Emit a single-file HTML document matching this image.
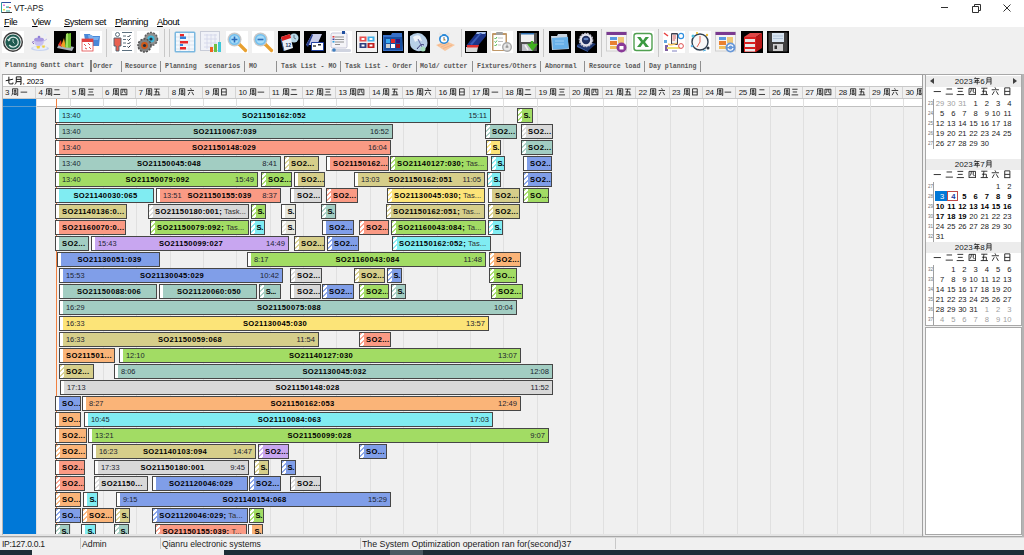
<!DOCTYPE html><html><head><meta charset="utf-8"><style>
*{margin:0;padding:0;box-sizing:border-box}
html,body{width:1024px;height:555px;overflow:hidden;background:#f0f0f0;font-family:"Liberation Sans",sans-serif;position:relative}
.abs{position:absolute}
#title{position:absolute;left:0;top:0;width:1024px;height:27px;background:#fff}
#title .t{position:absolute;left:14px;top:2.5px;font-size:8.3px;letter-spacing:0px;color:#101010}
#menu span{position:absolute;top:16.5px;font-size:9.3px;letter-spacing:-0.4px;color:#000}
#tb{position:absolute;left:0;top:27px;width:1024px;height:31px;background:#f0f0f0}
.ic{position:absolute;top:31px;width:22px;height:22px}
.sep{position:absolute;top:29px;width:1px;height:28px;background:#c8c8c8}
#tabs span{position:absolute;top:63.3px;font-family:"Liberation Mono",monospace;font-size:6.6px;font-weight:bold;color:#585858;white-space:pre}
.tsep{position:absolute;top:61px;width:1px;height:11px;background:#909090}
#gantt{position:absolute;left:3px;top:74px;width:920px;height:461px;background:#f0f0f0;border-top:1px solid #a0a0a0;overflow:hidden}
#mrow{position:absolute;left:0;top:0;width:919px;height:11px;background:#fff}
#mrow span{position:absolute;left:2px;top:1px;font-size:7.8px;letter-spacing:-0.15px;color:#000}
#drow{position:absolute;left:0;top:11px;width:919px;height:13px;background:#f0f0f0;border-top:1px solid #c8c8c8;border-bottom:1px solid #c8c8c8}
.dh{position:absolute;top:0px;width:33px;height:11px;border-right:1px solid #d4d4d4;font-size:8px;letter-spacing:-0.4px;padding-left:2px;line-height:11px;color:#202020;white-space:nowrap;overflow:hidden}
#wrow{position:absolute;left:0;top:24px;width:919px;height:8px;background:#fff;border-bottom:1px solid #c0c0c0}
#body{position:absolute;left:0;top:33px;width:919px;height:428px}
.gl{position:absolute;top:24px;width:1px;height:437px;background:#e0e0e0}
#blue{position:absolute;left:0;top:24px;width:33px;height:435px;background:#0078d7}
#now{position:absolute;left:53px;top:24px;width:1px;height:435px;background:#f08040}
.b{position:absolute;height:15px;border:1px solid #464646;overflow:hidden;white-space:nowrap;font-size:7.6px;letter-spacing:0.33px;line-height:13px;color:#000}
.b::before{content:"";position:absolute;left:0;top:0;width:3px;height:13px;background:#fff}
.b.h::before{width:4px;background:repeating-linear-gradient(135deg,rgba(255,255,255,.12) 0 1.7px,#fff 1.7px 3.7px)}
.b .m{position:absolute;left:6px;right:4px;top:0;text-align:center;overflow:visible}
.b .m b{font-weight:bold;color:#000}
.b .m.sd{letter-spacing:-0.3px;left:5.5px}
.b .m i{font-style:normal;color:#303030;letter-spacing:0}
.b .lt{position:absolute;left:6px;top:0;letter-spacing:0;font-size:7.4px;color:#1c2430}
.b .rt{position:absolute;right:3px;top:0;letter-spacing:0;font-size:7.6px;color:#1c2430}
#cal{position:absolute;left:925px;top:74px;width:97px;height:252px;background:#fff;border:1px solid #a8a8a8}
#cal2{position:absolute;left:925px;top:327px;width:97px;height:208px;background:#fff;border:1px solid #a8a8a8}
.mh{position:absolute;left:0;width:95px;height:11px;background:#ececec;font-size:8px;line-height:11px;text-align:center;color:#202020}
.wd{position:absolute;font-size:8.5px;color:#202020;width:11px;text-align:center}
.dn{position:absolute;font-size:7.6px;color:#202020;width:11.2px;text-align:right;line-height:10px}
.dn.g{color:#a0a0a0}
.dn.sel{color:#fff}
.dn.tod{color:#1838a0;font-weight:bold}
.dn.bd{font-weight:bold;color:#000}
.wk{position:absolute;left:2px;font-size:4.5px;color:#707070;line-height:10px}
.wl{position:absolute;left:7px;width:1px;background:#a0a0a0}
#status{position:absolute;left:0;top:537px;width:1024px;height:13px;background:#f0f0f0;border-top:1px solid #d8d8d8}
#status span{position:absolute;top:1.5px;font-size:8px;color:#202020;white-space:nowrap}
.ssep{position:absolute;top:538px;width:1px;height:11px;background:#c8c8c8}
#task{position:absolute;left:0;top:550px;width:1024px;height:5px;background:#1e2e36}
</style></head><body><div id="title"><div class="t">VT-APS</div></div><svg class="abs" style="left:1px;top:2px" width="11" height="11" viewBox="0 0 11 11"><path d="M0.5 0.5 H10" stroke="#3050a0" stroke-width="1"/><path d="M0.5 0.5 V10.5" stroke="#30a0a0" stroke-width="1"/><path d="M0.5 10.5 H11" stroke="#404040" stroke-width="1"/><rect x="2" y="2.5" width="2" height="1.5" fill="#e080e0"/><rect x="5" y="4.5" width="3" height="1.2" fill="#30a0a0"/><rect x="8" y="5" width="2" height="1.2" fill="#e05030"/><rect x="2" y="7" width="2" height="1.5" fill="#e0e040"/><rect x="5" y="8.5" width="4" height="1" fill="#40b0a0"/></svg><div id="menu"><span style="left:4px"><u>F</u>ile</span><span style="left:32px"><u>V</u>iew</span><span style="left:64px"><u>S</u>ystem set</span><span style="left:115px"><u>P</u>lanning</span><span style="left:157px"><u>A</u>bout</span></div><svg class="abs" style="left:930px;top:0" width="94" height="16" viewBox="0 0 94 16"><path d="M11 7.5 H18" stroke="#303030" stroke-width="1"/><path d="M42.5 6.5 H48.5 V12.5 H42.5Z M44.5 6.5 V4.5 H50.5 V10.5 H48.5" fill="none" stroke="#303030" stroke-width="1"/><path d="M73.5 4.5 L80.5 11.5 M80.5 4.5 L73.5 11.5" stroke="#303030" stroke-width="1"/></svg><div id="tb"></div><div class="ic" style="left:2px"><svg width="22" height="22" viewBox="0 0 22 22"><rect width="22" height="22" fill="#fff"/><circle cx="11" cy="11" r="10" fill="#3a3a3a"/><circle cx="11" cy="11" r="8.6" fill="#e8e8e8"/><circle cx="11" cy="11" r="7.6" fill="#1e5a50"/><path d="M6.5 9.5 A5 5 0 1 1 7.2 14" fill="none" stroke="#d8e8e4" stroke-width="1.3"/><path d="M5 8 L6.5 10.5 L8.8 8.8Z" fill="#d8e8e4"/><path d="M11 8 V11 L12.5 12.5" stroke="#d8e8e4" stroke-width="0.8" fill="none"/></svg></div><div class="ic" style="left:28px"><svg width="22" height="22" viewBox="0 0 22 22"><ellipse cx="12" cy="17.5" rx="9" ry="2.6" fill="#c8d4f0"/><ellipse cx="12" cy="17" rx="7" ry="1.8" fill="#e8eefa"/><path d="M6 9 Q6 15 11 15 Q16 15 16 9Z" fill="#c8c0f0"/><ellipse cx="11" cy="8.5" rx="5" ry="2" fill="#a898e0"/><circle cx="11" cy="6" r="1.3" fill="#9080d8"/><path d="M5.5 10 Q3.5 11 5.8 13" stroke="#8060c0" stroke-width="1" fill="none"/><path d="M16 10 L19 8" stroke="#c0b8e8" stroke-width="1"/><circle cx="17" cy="4" r="1.5" fill="#e8eef8"/><path d="M8.5 15 L12 15 L11.5 17.5 L9 17.5Z" fill="#f0d040"/><path d="M14 14.5 L17 14.5 L16.5 16.8 L14.5 16.8Z" fill="#f0d040"/></svg></div><div class="ic" style="left:54px"><svg width="22" height="22" viewBox="0 0 22 22"><rect width="22" height="22" fill="#000"/><path d="M3 17 L18 20 L20 16 L5 13Z" fill="#a8b0b8"/><path d="M4 14 L7 9 L8 16Z" fill="#e03020"/><path d="M7 15 L10 7 L12 17Z" fill="#f0a020"/><path d="M11 16 L12 3 L17 2 L17 17Z" fill="#70c030"/><path d="M12 3 L14 2 L14 17 L12 16Z" fill="#a0e060"/></svg></div><div class="ic" style="left:80px"><svg width="22" height="22" viewBox="0 0 22 22"><rect width="22" height="22" fill="#fff"/><path d="M4 3 L10 3 L11 5 L20 5 L19 15 L6 15Z" fill="#4a88d8"/><path d="M8 4 L12 4 L13 6 L19 6 L18 9 L9 9Z" fill="#78b0f0"/><rect x="2" y="8" width="11" height="12" fill="#fff" stroke="#e04848" stroke-width="0.8"/><rect x="2" y="8" width="11" height="3" fill="#e04040"/><path d="M4 13 L6 15 M8 12 L10 14 M5 17 L7 18 M9 16 L11 18" stroke="#e05050" stroke-width="1"/></svg></div><div class="ic" style="left:112px"><svg width="22" height="22" viewBox="0 0 22 22"><rect width="22" height="22" fill="#fff"/><circle cx="5.5" cy="3.5" r="2" fill="none" stroke="#4a6070" stroke-width="0.9"/><path d="M2 7 L9 7 L9 15 L7 15 L7 20 L4 20 L4 15 L2 15Z" fill="#e86050" stroke="#4a6070" stroke-width="0.9"/><path d="M10 1.5 H20 M11 5 H14 M11 8.5 H14 M11 12 H14 M11 15.5 H14 M10 19.5 H20" stroke="#4a6070" stroke-width="0.9"/><path d="M15.5 5 L16.5 6 L18.5 4 M15.5 8.5 L16.5 9.5 L18.5 7.5 M15.5 12 L16.5 13 L18.5 11 M15.5 15.5 L16.5 16.5 L18.5 14.5" stroke="#203040" stroke-width="1" fill="none"/></svg></div><div class="ic" style="left:137px"><svg width="22" height="22" viewBox="0 0 22 22"><rect width="22" height="22" fill="#fff"/><circle cx="14" cy="8" r="6.5" fill="#909090" stroke="#606060" stroke-dasharray="2 1.2" stroke-width="1.5"/><circle cx="14" cy="8" r="3.6" fill="#40b8d8"/><circle cx="14" cy="8" r="1.6" fill="#203040"/><circle cx="7.5" cy="14.5" r="6.5" fill="#808080" stroke="#505050" stroke-dasharray="2 1.2" stroke-width="1.5"/><circle cx="7.5" cy="14.5" r="3.4" fill="#d05818"/><circle cx="7.5" cy="14.5" r="1.6" fill="#203040"/></svg></div><div class="ic" style="left:174px"><svg width="22" height="22" viewBox="0 0 22 22"><rect x="0.5" y="0.5" width="21" height="21" rx="1.5" fill="#7ab8e0"/><rect x="2" y="2" width="18" height="18" fill="#f4f8fc"/><path d="M2 6 H20 M2 10 H20 M2 14 H20 M2 18 H20 M6 2 V20 M15 2 V20" stroke="#c0d0e0" stroke-width="0.5"/><rect x="6" y="3" width="4" height="2.5" fill="#e82828"/><rect x="6" y="5.5" width="6" height="2.5" fill="#3080d8"/><rect x="6" y="10" width="8" height="2.5" fill="#e82828"/><rect x="6" y="13" width="3" height="2" fill="#3080d8"/><rect x="6" y="16" width="6" height="2.5" fill="#e82828"/></svg></div><div class="ic" style="left:200px"><svg width="22" height="22" viewBox="0 0 22 22"><rect x="0.5" y="0.5" width="19" height="19" fill="#f0f2f8" stroke="#c8ccd8"/><path d="M4 4 H17 M4 8 H17 M4 12 H17 M4 16 H17 M7 3 V18 M11 3 V18 M15 3 V18" stroke="#d0d4e8" stroke-width="0.8"/><rect x="10" y="16" width="3" height="5" fill="#f06020"/><rect x="14" y="13" width="3" height="8" fill="#70c040"/><rect x="18" y="11" width="3" height="10" fill="#40c8d8"/></svg></div><div class="ic" style="left:226px"><svg width="22" height="22" viewBox="0 0 22 22"><rect width="22" height="22" fill="#fff"/><path d="M13 13 L19.5 19.5" stroke="#e8a030" stroke-width="3.2" stroke-linecap="round"/><circle cx="8.5" cy="8.5" r="7" fill="#c8c8c8"/><circle cx="8.5" cy="8.5" r="5.6" fill="#70c0f0"/><circle cx="8.5" cy="8.5" r="4" fill="#a8dcf8"/><path d="M5.5 8.5 H11.5 M8.5 5.5 V11.5" stroke="#2a6ab8" stroke-width="1.6"/></svg></div><div class="ic" style="left:252px"><svg width="22" height="22" viewBox="0 0 22 22"><rect width="22" height="22" fill="#fff"/><path d="M13 13 L19.5 19.5" stroke="#e8a030" stroke-width="3.2" stroke-linecap="round"/><circle cx="8.5" cy="8.5" r="7" fill="#c8c8c8"/><circle cx="8.5" cy="8.5" r="5.6" fill="#70c0f0"/><circle cx="8.5" cy="8.5" r="4" fill="#a8dcf8"/><path d="M5.5 8.5 H11.5" stroke="#2a6ab8" stroke-width="1.6"/></svg></div><div class="ic" style="left:278px"><svg width="22" height="22" viewBox="0 0 22 22"><rect width="22" height="22" fill="#000"/><circle cx="16" cy="7" r="4.5" fill="#b8d8e8"/><path d="M16 4 V7 L18 8" stroke="#506070" stroke-width="0.8" fill="none"/><path d="M3 6 L12 3 L15 17 L6 20Z" fill="#e8f0f8"/><path d="M3 6 L12 3 L13 7 L4 10Z" fill="#d82020"/><text x="7.5" y="16" font-size="5" font-family="Liberation Sans" fill="#203060" font-weight="bold">12</text><path d="M3 8 L6 20" stroke="#3060a0" stroke-width="1"/></svg></div><div class="ic" style="left:304px"><svg width="22" height="22" viewBox="0 0 22 22"><rect width="22" height="22" fill="#000"/><path d="M2 14 L8 3 L18 3 L13 14Z" fill="#c8cce8"/><path d="M2 14 L8 3 L9 4 L4 16Z" fill="#283c8c"/><rect x="7" y="11" width="13" height="9" rx="1" fill="#2040a0"/><rect x="8" y="12" width="11" height="7" fill="#fff"/><rect x="9" y="14" width="3" height="2" fill="#707070"/><rect x="14" y="13" width="3" height="1.5" fill="#303030"/></svg></div><div class="ic" style="left:330px"><svg width="22" height="22" viewBox="0 0 22 22"><rect width="22" height="22" fill="#fff"/><rect x="1" y="2" width="16" height="15" rx="1.5" fill="#f4f4f8" stroke="#b0b0c8" stroke-width="0.7"/><rect x="12" y="0" width="3" height="3" fill="#2050a0"/><rect x="2.5" y="5" width="2" height="1.6" fill="#e04040"/><rect x="2.5" y="7.5" width="2" height="1.6" fill="#4040a0"/><rect x="2.5" y="10" width="2" height="1.6" fill="#30a0e0"/><path d="M5 6 H14 M5 8.5 H14 M5 11 H14 M5 13.5 H10" stroke="#909090" stroke-width="1"/><rect x="1" y="18" width="20" height="3" rx="1.5" fill="#d0d4e0"/><circle cx="4" cy="19" r="1.8" fill="#4080c0"/></svg></div><div class="ic" style="left:356px"><svg width="22" height="22" viewBox="0 0 22 22"><rect x="0.5" y="0.5" width="21" height="21" fill="#f2f2f2" stroke="#202020" stroke-width="1"/><rect x="3.5" y="5.5" width="7" height="5" fill="#e85050"/><rect x="5.5" y="7" width="3" height="2" fill="#fff"/><rect x="11.5" y="5.5" width="7" height="5" fill="#40b0e8"/><rect x="13.5" y="7" width="3" height="2" fill="#fff"/><rect x="3.5" y="12" width="7" height="5" fill="#304080"/><rect x="5.5" y="13.5" width="3" height="2" fill="#fff"/><rect x="11.5" y="12" width="7" height="5" fill="#c02020"/><rect x="13.5" y="13.5" width="3" height="2" fill="#fff"/></svg></div><div class="ic" style="left:382px"><svg width="22" height="22" viewBox="0 0 22 22"><rect width="22" height="22" fill="#000"/><path d="M1 4 L9 4 L10 2 L20 2 L21 20 L1 20Z" fill="#3870c8"/><rect x="2" y="6" width="18" height="13" fill="#1850a0"/><rect x="4" y="8" width="4" height="4" fill="#38a8f0"/><rect x="9" y="8" width="4" height="4" fill="#e02828"/><rect x="14" y="8" width="4" height="4" fill="#301880"/><rect x="4" y="13" width="4" height="4" fill="#d0d0d0"/><rect x="9" y="13" width="4" height="4" fill="#fff"/><rect x="14" y="13" width="4" height="4" fill="#a01020"/></svg></div><div class="ic" style="left:408px"><svg width="22" height="22" viewBox="0 0 22 22"><rect width="22" height="22" fill="#000"/><path d="M2 5 Q8 0 14 3 Q21 8 19 15 Q16 21 9 20 Q2 18 2 12Z" fill="#b8d0e8"/><path d="M5 6 Q9 3 12 5 L14 10 Q10 8 7 11Z" fill="#f0f4fa"/><path d="M9 18 Q13 12 16 14" stroke="#303070" stroke-width="1" fill="none"/><path d="M10 8 L14 16" stroke="#505090" stroke-width="0.8"/><circle cx="15" cy="18" r="2.5" fill="#a8e0c0"/></svg></div><div class="ic" style="left:434px"><svg width="22" height="22" viewBox="0 0 22 22"><path d="M2 14 L12 10 L21 14 L11 20Z" fill="#f8c8a0"/><path d="M4 14.5 L12 11.5 M7 16 L15 12.5 M9 17.5 L18 14" stroke="#f0a878" stroke-width="0.6"/><circle cx="10" cy="8" r="5" fill="#2888d8"/><circle cx="10" cy="8.3" r="3.3" fill="#fff"/><path d="M10 6 V8.5 L11.5 9" stroke="#203040" stroke-width="0.7" fill="none"/><circle cx="6.5" cy="3" r="1.8" fill="#e8e8e8"/><circle cx="14" cy="3" r="1.8" fill="#e8e8e8"/><circle cx="10" cy="9" r="0.8" fill="#f0a020"/></svg></div><div class="ic" style="left:465px"><svg width="22" height="22" viewBox="0 0 22 22"><rect width="22" height="22" fill="#000"/><path d="M1 15 L12 1 L21 1 L21 5 L11 17Z" fill="#1c3488"/><path d="M12 1 L21 1 L20 3 L11 3Z" fill="#a8c0e8"/><path d="M5 13 L15 2 L17 2 L7 14Z" fill="#3a5cb8"/><path d="M1 16 L13 16 L12 21 L1 21Z" fill="#d8d8d8"/><path d="M2 14 L14 14 L13 16.5 L2 16.5Z" fill="#e03030"/></svg></div><div class="ic" style="left:491px"><svg width="22" height="22" viewBox="0 0 22 22"><rect width="22" height="22" fill="#fff"/><rect x="1" y="2" width="15" height="18" rx="1" fill="#c09868"/><rect x="2.5" y="4" width="12" height="15" fill="#fff"/><rect x="5" y="1" width="7" height="3" rx="1" fill="#a0a0a0"/><path d="M3.5 7 L4.5 8 L6 6 M3.5 10.5 L4.5 11.5 L6 9.5 M3.5 14 L4.5 15 L6 13" stroke="#40b040" stroke-width="0.9" fill="none"/><path d="M7 7 H12 M7 10.5 H12 M7 14 H10" stroke="#b0b0b0" stroke-width="0.8"/><circle cx="16" cy="16" r="5" fill="#a8a8a8"/><circle cx="16" cy="16" r="3.6" fill="#e8e8e8"/><path d="M16 13.5 V16.5 M14.5 16 H17.5" stroke="#707070" stroke-width="0.8"/></svg></div><div class="ic" style="left:517px"><svg width="22" height="22" viewBox="0 0 22 22"><rect width="22" height="22" fill="#000"/><rect x="2" y="2" width="18" height="18" fill="#505050"/><rect x="4" y="2" width="13" height="9" fill="#f0f0f0"/><rect x="4" y="2" width="13" height="1.5" fill="#3070b0"/><rect x="5" y="13" width="11" height="7" fill="#c0c0c8"/><path d="M8 14 L11 19" stroke="#f0f0f0" stroke-width="1.5"/><path d="M15 10 V15 M12.5 14 L15.5 18 L18.5 14Z" stroke="#40b020" stroke-width="2.5" fill="#40b020"/></svg></div><div class="ic" style="left:549px"><svg width="22" height="22" viewBox="0 0 22 22"><rect width="22" height="22" fill="#000"/><path d="M2 5 L8 5 L9 3 L18 3 L20 18 L3 19Z" fill="#c8d4e0"/><path d="M3 7 L19 6 L19.5 17.5 L4 18.5Z" fill="#68b0e8"/><path d="M6 10 H15 M6 13 H15" stroke="#b8dcf8" stroke-width="0.7"/></svg></div><div class="ic" style="left:575px"><svg width="22" height="22" viewBox="0 0 22 22"><rect width="22" height="22" fill="#000"/><path d="M2 14 L10 9 L21 13 L13 20Z" fill="#203870"/><path d="M2 14 L13 20 L13 21 L2 16Z" fill="#3858a0"/><circle cx="11" cy="9" r="6.5" fill="#e8e8f0" stroke="#c0c0d0" stroke-dasharray="1.8 1" stroke-width="1.6"/><circle cx="11" cy="9" r="4.2" fill="#203060"/><ellipse cx="11" cy="8" rx="2.5" ry="1.2" fill="#6080c0"/></svg></div><div class="ic" style="left:606px"><svg width="22" height="22" viewBox="0 0 22 22"><rect x="0.5" y="1" width="20" height="19" fill="#f4f4f4" stroke="#d0d0d0"/><rect x="0.5" y="1" width="20" height="3" fill="#7a3a90"/><rect x="4" y="6" width="7" height="3" fill="#5a9ae0"/><rect x="12" y="6" width="6" height="6" fill="#f0c878"/><rect x="4" y="10" width="7" height="4" fill="#e88030"/><rect x="4" y="15" width="7" height="3" fill="#f0c060"/><circle cx="15.5" cy="16.5" r="5" fill="#8a3a98"/><rect x="13.5" y="15" width="4" height="3.5" fill="#fff"/></svg></div><div class="ic" style="left:632px"><svg width="22" height="22" viewBox="0 0 22 22"><rect width="22" height="22" fill="#fff"/><rect x="2" y="2.5" width="18" height="17" rx="2.5" fill="#fff" stroke="#50a050" stroke-width="1.4"/><path d="M5 6 L8.5 6 L11 9.5 L13.5 6 L17 6 L13 11 L17 16 L13.5 16 L11 12.5 L8.5 16 L5 16 L9 11Z" fill="#3a9a40"/></svg></div><div class="ic" style="left:663px"><svg width="22" height="22" viewBox="0 0 22 22"><rect width="22" height="22" fill="#fff"/><rect x="8" y="2" width="7" height="12" rx="1" fill="#404050"/><rect x="9" y="3.5" width="5" height="9" fill="#f0f0f0"/><path d="M9.5 5 H13 M9.5 7 H13 M9.5 9 H12" stroke="#e04040" stroke-width="0.8"/><circle cx="18" cy="5" r="2.6" fill="none" stroke="#3090e0" stroke-width="1.2"/><path d="M1 2 L5 5" stroke="#e84040" stroke-width="1.5"/><rect x="1" y="9" width="3" height="3" fill="#60a8e0"/><rect x="2" y="14" width="3" height="6" fill="#8060a0"/><path d="M4 17 H17" stroke="#f0e070" stroke-width="2"/><circle cx="18" cy="15" r="2.4" fill="none" stroke="#e05050" stroke-width="1"/><path d="M9 20 H14" stroke="#8080c0" stroke-width="1"/><path d="M5 13 Q9 15 14 12" stroke="#f8c860" stroke-width="1.4" fill="none"/></svg></div><div class="ic" style="left:689px"><svg width="22" height="22" viewBox="0 0 22 22"><rect width="22" height="22" fill="#fff"/><circle cx="11" cy="11" r="8" fill="#f8f8f8" stroke="#304050" stroke-width="1.4"/><path d="M11 5 V11 L8 16" stroke="#e05040" stroke-width="0.9" fill="none"/><circle cx="4" cy="5" r="1.5" fill="#50c0e0"/><circle cx="18" cy="4" r="1.2" fill="#f0c040"/><circle cx="3" cy="15" r="1.3" fill="#60b0e0"/><circle cx="19" cy="17" r="1.5" fill="#303840"/><circle cx="8" cy="2" r="1" fill="#f0c020"/><path d="M14 20 L17 19" stroke="#50b0e0" stroke-width="1"/></svg></div><div class="ic" style="left:715px"><svg width="22" height="22" viewBox="0 0 22 22"><rect x="0.5" y="1" width="20" height="19" fill="#f4f4f4" stroke="#d0d0d0"/><rect x="0.5" y="1" width="20" height="3" fill="#7a3a90"/><rect x="4" y="6" width="7" height="3" fill="#5a9ae0"/><rect x="12" y="6" width="6" height="6" fill="#f0c878"/><rect x="4" y="10" width="7" height="4" fill="#e88030"/><rect x="4" y="15" width="7" height="3" fill="#f0c060"/><circle cx="15.5" cy="16.5" r="5" fill="#6898d8"/><path d="M13 16 A2.6 2.6 0 0 1 18 15.5 M18 17 A2.6 2.6 0 0 1 13 17.5" stroke="#fff" stroke-width="1.2" fill="none"/></svg></div><div class="ic" style="left:741px"><svg width="22" height="22" viewBox="0 0 22 22"><rect width="22" height="22" fill="#000"/><path d="M3 6 L9 2 L21 2 L15 6Z" fill="#e04848"/><path d="M15 6 L21 2 L21 17 L15 21Z" fill="#b81818"/><rect x="3" y="6" width="12" height="15" fill="#d82020"/><rect x="4" y="8" width="10" height="3" fill="#e8e8e8"/><rect x="4" y="13" width="10" height="3" fill="#e8e8e8"/><rect x="4" y="18" width="10" height="2.5" fill="#e8e8e8"/></svg></div><div class="ic" style="left:767px"><svg width="22" height="22" viewBox="0 0 22 22"><rect width="22" height="22" fill="#000"/><rect x="1.5" y="1.5" width="19" height="19" rx="1" fill="#404040"/><rect x="5" y="2" width="12" height="9" fill="#d8e4f0"/><path d="M6 5 H16 M6 7.5 H16" stroke="#a0b8d0" stroke-width="0.7"/><rect x="6" y="13" width="10" height="7" fill="#d0d0d0"/><rect x="7.5" y="14.5" width="2.5" height="3.5" fill="#303030"/></svg></div><div class="sep" style="left:106px"></div><div class="sep" style="left:164px"></div><div class="sep" style="left:169px"></div><div class="sep" style="left:461px"></div><div class="sep" style="left:543px"></div><div class="sep" style="left:601px"></div><div class="sep" style="left:658px"></div><div id="tabs"><div class="abs" style="left:1px;top:59px;width:89px;height:15px;background:#f3f3f3"></div><span style="left:5px;margin-top:-1px">Planning Gantt chart</span><span style="left:93px;margin-top:0px">Order</span><span style="left:125px;margin-top:0px">Resource</span><span style="left:165px;margin-top:0px">Planning  scenarios</span><span style="left:249px;margin-top:0px">MO</span><span style="left:281px;margin-top:0px">Task List - MO</span><span style="left:345px;margin-top:0px">Task List - Order</span><span style="left:420px;margin-top:0px">Mold/ cutter</span><span style="left:477px;margin-top:0px">Fixtures/Others</span><span style="left:545px;margin-top:0px">Abnormal</span><span style="left:589px;margin-top:0px">Resource load</span><span style="left:649px;margin-top:0px">Day planning</span><div class="tsep" style="left:121px"></div><div class="tsep" style="left:160px"></div><div class="tsep" style="left:244px"></div><div class="tsep" style="left:276px"></div><div class="tsep" style="left:340px"></div><div class="tsep" style="left:416px"></div><div class="tsep" style="left:472px"></div><div class="tsep" style="left:540px"></div><div class="tsep" style="left:584px"></div><div class="tsep" style="left:644px"></div><div class="tsep" style="left:700px"></div><div class="abs" style="left:90px;top:60px;width:2px;height:12px;background:#808080"></div></div><div id="gantt"><div id="mrow"><span><svg width="8.80" height="8.80" viewBox="0 0 10 10" style="vertical-align:-1px;display:inline-block;margin-left:0px"><path d="M0.8 5.4 L9.2 3.6 M4.4 0.8 V8 Q4.4 9 5.8 9 H9 V7.4" fill="none" stroke="#101010" stroke-width="1.1"/></svg><svg width="8.80" height="8.80" viewBox="0 0 10 10" style="vertical-align:-1px;display:inline-block;margin-left:0px"><path d="M2.6 1 V6 Q2.6 8.6 1 9.6 M2.6 1 H8 V9.6 L6.9 9.2 M2.6 3.8 H8 M2.6 6.4 H8" fill="none" stroke="#101010" stroke-width="1.1"/></svg>, 2023</span></div><div id="drow"><div class="dh" style="left:0.0px">3 <svg width="7.80" height="7.80" viewBox="0 0 10 10" style="vertical-align:-1px;display:inline-block;margin-left:0.6px"><path d="M2 1 V6 Q2 8.6 0.6 9.6 M2 1 H8.6 V9.6 L7.4 9.2 M3.6 3 H7 M5.3 1.8 V5 M3.4 5 H7.2 M3.9 6.4 H6.7 V8.4 H3.9 Z" fill="none" stroke="#202020" stroke-width="1.1"/></svg><svg width="7.80" height="7.80" viewBox="0 0 10 10" style="vertical-align:-1px;display:inline-block;margin-left:0.6px"><path d="M0.8 5.3 H9.2" fill="none" stroke="#202020" stroke-width="1.1"/></svg></div><div class="dh" style="left:33.4px">4 <svg width="7.80" height="7.80" viewBox="0 0 10 10" style="vertical-align:-1px;display:inline-block;margin-left:0.6px"><path d="M2 1 V6 Q2 8.6 0.6 9.6 M2 1 H8.6 V9.6 L7.4 9.2 M3.6 3 H7 M5.3 1.8 V5 M3.4 5 H7.2 M3.9 6.4 H6.7 V8.4 H3.9 Z" fill="none" stroke="#202020" stroke-width="1.1"/></svg><svg width="7.80" height="7.80" viewBox="0 0 10 10" style="vertical-align:-1px;display:inline-block;margin-left:0.6px"><path d="M1.8 2.3 H8.2 M0.8 8.3 H9.2" fill="none" stroke="#202020" stroke-width="1.1"/></svg></div><div class="dh" style="left:66.7px">5 <svg width="7.80" height="7.80" viewBox="0 0 10 10" style="vertical-align:-1px;display:inline-block;margin-left:0.6px"><path d="M2 1 V6 Q2 8.6 0.6 9.6 M2 1 H8.6 V9.6 L7.4 9.2 M3.6 3 H7 M5.3 1.8 V5 M3.4 5 H7.2 M3.9 6.4 H6.7 V8.4 H3.9 Z" fill="none" stroke="#202020" stroke-width="1.1"/></svg><svg width="7.80" height="7.80" viewBox="0 0 10 10" style="vertical-align:-1px;display:inline-block;margin-left:0.6px"><path d="M1.6 1.6 H8.4 M2.2 5.1 H7.8 M0.8 8.8 H9.2" fill="none" stroke="#202020" stroke-width="1.1"/></svg></div><div class="dh" style="left:100.1px">6 <svg width="7.80" height="7.80" viewBox="0 0 10 10" style="vertical-align:-1px;display:inline-block;margin-left:0.6px"><path d="M2 1 V6 Q2 8.6 0.6 9.6 M2 1 H8.6 V9.6 L7.4 9.2 M3.6 3 H7 M5.3 1.8 V5 M3.4 5 H7.2 M3.9 6.4 H6.7 V8.4 H3.9 Z" fill="none" stroke="#202020" stroke-width="1.1"/></svg><svg width="7.80" height="7.80" viewBox="0 0 10 10" style="vertical-align:-1px;display:inline-block;margin-left:0.6px"><path d="M1.2 1.6 V9.2 M1.2 1.6 H8.8 V9.2 M1.2 8.6 H8.8 M3.9 1.6 Q3.9 5.2 2.4 6.6 M6.1 1.6 V5.6 Q6.1 6.4 7.6 6.4" fill="none" stroke="#202020" stroke-width="1.1"/></svg></div><div class="dh" style="left:133.4px">7 <svg width="7.80" height="7.80" viewBox="0 0 10 10" style="vertical-align:-1px;display:inline-block;margin-left:0.6px"><path d="M2 1 V6 Q2 8.6 0.6 9.6 M2 1 H8.6 V9.6 L7.4 9.2 M3.6 3 H7 M5.3 1.8 V5 M3.4 5 H7.2 M3.9 6.4 H6.7 V8.4 H3.9 Z" fill="none" stroke="#202020" stroke-width="1.1"/></svg><svg width="7.80" height="7.80" viewBox="0 0 10 10" style="vertical-align:-1px;display:inline-block;margin-left:0.6px"><path d="M1.4 1.4 H8.6 M4.6 1.4 L3.6 8.8 M2.2 4.9 H7.4 V8.8 M0.8 8.8 H9.2" fill="none" stroke="#202020" stroke-width="1.1"/></svg></div><div class="dh" style="left:166.8px">8 <svg width="7.80" height="7.80" viewBox="0 0 10 10" style="vertical-align:-1px;display:inline-block;margin-left:0.6px"><path d="M2 1 V6 Q2 8.6 0.6 9.6 M2 1 H8.6 V9.6 L7.4 9.2 M3.6 3 H7 M5.3 1.8 V5 M3.4 5 H7.2 M3.9 6.4 H6.7 V8.4 H3.9 Z" fill="none" stroke="#202020" stroke-width="1.1"/></svg><svg width="7.80" height="7.80" viewBox="0 0 10 10" style="vertical-align:-1px;display:inline-block;margin-left:0.6px"><path d="M4.6 0.4 L5.6 2.2 M0.8 3.2 H9.2 M3.8 5 L1.4 9.2 M6.2 5 L8.6 9.2" fill="none" stroke="#202020" stroke-width="1.1"/></svg></div><div class="dh" style="left:200.1px">9 <svg width="7.80" height="7.80" viewBox="0 0 10 10" style="vertical-align:-1px;display:inline-block;margin-left:0.6px"><path d="M2 1 V6 Q2 8.6 0.6 9.6 M2 1 H8.6 V9.6 L7.4 9.2 M3.6 3 H7 M5.3 1.8 V5 M3.4 5 H7.2 M3.9 6.4 H6.7 V8.4 H3.9 Z" fill="none" stroke="#202020" stroke-width="1.1"/></svg><svg width="7.80" height="7.80" viewBox="0 0 10 10" style="vertical-align:-1px;display:inline-block;margin-left:0.6px"><path d="M2 1 V9.4 M2 1 H8 V9.4 M2 5.1 H8 M2 8.9 H8" fill="none" stroke="#202020" stroke-width="1.1"/></svg></div><div class="dh" style="left:233.5px">10 <svg width="7.80" height="7.80" viewBox="0 0 10 10" style="vertical-align:-1px;display:inline-block;margin-left:0.6px"><path d="M2 1 V6 Q2 8.6 0.6 9.6 M2 1 H8.6 V9.6 L7.4 9.2 M3.6 3 H7 M5.3 1.8 V5 M3.4 5 H7.2 M3.9 6.4 H6.7 V8.4 H3.9 Z" fill="none" stroke="#202020" stroke-width="1.1"/></svg><svg width="7.80" height="7.80" viewBox="0 0 10 10" style="vertical-align:-1px;display:inline-block;margin-left:0.6px"><path d="M0.8 5.3 H9.2" fill="none" stroke="#202020" stroke-width="1.1"/></svg></div><div class="dh" style="left:266.8px">11 <svg width="7.80" height="7.80" viewBox="0 0 10 10" style="vertical-align:-1px;display:inline-block;margin-left:0.6px"><path d="M2 1 V6 Q2 8.6 0.6 9.6 M2 1 H8.6 V9.6 L7.4 9.2 M3.6 3 H7 M5.3 1.8 V5 M3.4 5 H7.2 M3.9 6.4 H6.7 V8.4 H3.9 Z" fill="none" stroke="#202020" stroke-width="1.1"/></svg><svg width="7.80" height="7.80" viewBox="0 0 10 10" style="vertical-align:-1px;display:inline-block;margin-left:0.6px"><path d="M1.8 2.3 H8.2 M0.8 8.3 H9.2" fill="none" stroke="#202020" stroke-width="1.1"/></svg></div><div class="dh" style="left:300.2px">12 <svg width="7.80" height="7.80" viewBox="0 0 10 10" style="vertical-align:-1px;display:inline-block;margin-left:0.6px"><path d="M2 1 V6 Q2 8.6 0.6 9.6 M2 1 H8.6 V9.6 L7.4 9.2 M3.6 3 H7 M5.3 1.8 V5 M3.4 5 H7.2 M3.9 6.4 H6.7 V8.4 H3.9 Z" fill="none" stroke="#202020" stroke-width="1.1"/></svg><svg width="7.80" height="7.80" viewBox="0 0 10 10" style="vertical-align:-1px;display:inline-block;margin-left:0.6px"><path d="M1.6 1.6 H8.4 M2.2 5.1 H7.8 M0.8 8.8 H9.2" fill="none" stroke="#202020" stroke-width="1.1"/></svg></div><div class="dh" style="left:333.5px">13 <svg width="7.80" height="7.80" viewBox="0 0 10 10" style="vertical-align:-1px;display:inline-block;margin-left:0.6px"><path d="M2 1 V6 Q2 8.6 0.6 9.6 M2 1 H8.6 V9.6 L7.4 9.2 M3.6 3 H7 M5.3 1.8 V5 M3.4 5 H7.2 M3.9 6.4 H6.7 V8.4 H3.9 Z" fill="none" stroke="#202020" stroke-width="1.1"/></svg><svg width="7.80" height="7.80" viewBox="0 0 10 10" style="vertical-align:-1px;display:inline-block;margin-left:0.6px"><path d="M1.2 1.6 V9.2 M1.2 1.6 H8.8 V9.2 M1.2 8.6 H8.8 M3.9 1.6 Q3.9 5.2 2.4 6.6 M6.1 1.6 V5.6 Q6.1 6.4 7.6 6.4" fill="none" stroke="#202020" stroke-width="1.1"/></svg></div><div class="dh" style="left:366.9px">14 <svg width="7.80" height="7.80" viewBox="0 0 10 10" style="vertical-align:-1px;display:inline-block;margin-left:0.6px"><path d="M2 1 V6 Q2 8.6 0.6 9.6 M2 1 H8.6 V9.6 L7.4 9.2 M3.6 3 H7 M5.3 1.8 V5 M3.4 5 H7.2 M3.9 6.4 H6.7 V8.4 H3.9 Z" fill="none" stroke="#202020" stroke-width="1.1"/></svg><svg width="7.80" height="7.80" viewBox="0 0 10 10" style="vertical-align:-1px;display:inline-block;margin-left:0.6px"><path d="M1.4 1.4 H8.6 M4.6 1.4 L3.6 8.8 M2.2 4.9 H7.4 V8.8 M0.8 8.8 H9.2" fill="none" stroke="#202020" stroke-width="1.1"/></svg></div><div class="dh" style="left:400.2px">15 <svg width="7.80" height="7.80" viewBox="0 0 10 10" style="vertical-align:-1px;display:inline-block;margin-left:0.6px"><path d="M2 1 V6 Q2 8.6 0.6 9.6 M2 1 H8.6 V9.6 L7.4 9.2 M3.6 3 H7 M5.3 1.8 V5 M3.4 5 H7.2 M3.9 6.4 H6.7 V8.4 H3.9 Z" fill="none" stroke="#202020" stroke-width="1.1"/></svg><svg width="7.80" height="7.80" viewBox="0 0 10 10" style="vertical-align:-1px;display:inline-block;margin-left:0.6px"><path d="M4.6 0.4 L5.6 2.2 M0.8 3.2 H9.2 M3.8 5 L1.4 9.2 M6.2 5 L8.6 9.2" fill="none" stroke="#202020" stroke-width="1.1"/></svg></div><div class="dh" style="left:433.6px">16 <svg width="7.80" height="7.80" viewBox="0 0 10 10" style="vertical-align:-1px;display:inline-block;margin-left:0.6px"><path d="M2 1 V6 Q2 8.6 0.6 9.6 M2 1 H8.6 V9.6 L7.4 9.2 M3.6 3 H7 M5.3 1.8 V5 M3.4 5 H7.2 M3.9 6.4 H6.7 V8.4 H3.9 Z" fill="none" stroke="#202020" stroke-width="1.1"/></svg><svg width="7.80" height="7.80" viewBox="0 0 10 10" style="vertical-align:-1px;display:inline-block;margin-left:0.6px"><path d="M2 1 V9.4 M2 1 H8 V9.4 M2 5.1 H8 M2 8.9 H8" fill="none" stroke="#202020" stroke-width="1.1"/></svg></div><div class="dh" style="left:466.9px">17 <svg width="7.80" height="7.80" viewBox="0 0 10 10" style="vertical-align:-1px;display:inline-block;margin-left:0.6px"><path d="M2 1 V6 Q2 8.6 0.6 9.6 M2 1 H8.6 V9.6 L7.4 9.2 M3.6 3 H7 M5.3 1.8 V5 M3.4 5 H7.2 M3.9 6.4 H6.7 V8.4 H3.9 Z" fill="none" stroke="#202020" stroke-width="1.1"/></svg><svg width="7.80" height="7.80" viewBox="0 0 10 10" style="vertical-align:-1px;display:inline-block;margin-left:0.6px"><path d="M0.8 5.3 H9.2" fill="none" stroke="#202020" stroke-width="1.1"/></svg></div><div class="dh" style="left:500.2px">18 <svg width="7.80" height="7.80" viewBox="0 0 10 10" style="vertical-align:-1px;display:inline-block;margin-left:0.6px"><path d="M2 1 V6 Q2 8.6 0.6 9.6 M2 1 H8.6 V9.6 L7.4 9.2 M3.6 3 H7 M5.3 1.8 V5 M3.4 5 H7.2 M3.9 6.4 H6.7 V8.4 H3.9 Z" fill="none" stroke="#202020" stroke-width="1.1"/></svg><svg width="7.80" height="7.80" viewBox="0 0 10 10" style="vertical-align:-1px;display:inline-block;margin-left:0.6px"><path d="M1.8 2.3 H8.2 M0.8 8.3 H9.2" fill="none" stroke="#202020" stroke-width="1.1"/></svg></div><div class="dh" style="left:533.6px">19 <svg width="7.80" height="7.80" viewBox="0 0 10 10" style="vertical-align:-1px;display:inline-block;margin-left:0.6px"><path d="M2 1 V6 Q2 8.6 0.6 9.6 M2 1 H8.6 V9.6 L7.4 9.2 M3.6 3 H7 M5.3 1.8 V5 M3.4 5 H7.2 M3.9 6.4 H6.7 V8.4 H3.9 Z" fill="none" stroke="#202020" stroke-width="1.1"/></svg><svg width="7.80" height="7.80" viewBox="0 0 10 10" style="vertical-align:-1px;display:inline-block;margin-left:0.6px"><path d="M1.6 1.6 H8.4 M2.2 5.1 H7.8 M0.8 8.8 H9.2" fill="none" stroke="#202020" stroke-width="1.1"/></svg></div><div class="dh" style="left:567.0px">20 <svg width="7.80" height="7.80" viewBox="0 0 10 10" style="vertical-align:-1px;display:inline-block;margin-left:0.6px"><path d="M2 1 V6 Q2 8.6 0.6 9.6 M2 1 H8.6 V9.6 L7.4 9.2 M3.6 3 H7 M5.3 1.8 V5 M3.4 5 H7.2 M3.9 6.4 H6.7 V8.4 H3.9 Z" fill="none" stroke="#202020" stroke-width="1.1"/></svg><svg width="7.80" height="7.80" viewBox="0 0 10 10" style="vertical-align:-1px;display:inline-block;margin-left:0.6px"><path d="M1.2 1.6 V9.2 M1.2 1.6 H8.8 V9.2 M1.2 8.6 H8.8 M3.9 1.6 Q3.9 5.2 2.4 6.6 M6.1 1.6 V5.6 Q6.1 6.4 7.6 6.4" fill="none" stroke="#202020" stroke-width="1.1"/></svg></div><div class="dh" style="left:600.3px">21 <svg width="7.80" height="7.80" viewBox="0 0 10 10" style="vertical-align:-1px;display:inline-block;margin-left:0.6px"><path d="M2 1 V6 Q2 8.6 0.6 9.6 M2 1 H8.6 V9.6 L7.4 9.2 M3.6 3 H7 M5.3 1.8 V5 M3.4 5 H7.2 M3.9 6.4 H6.7 V8.4 H3.9 Z" fill="none" stroke="#202020" stroke-width="1.1"/></svg><svg width="7.80" height="7.80" viewBox="0 0 10 10" style="vertical-align:-1px;display:inline-block;margin-left:0.6px"><path d="M1.4 1.4 H8.6 M4.6 1.4 L3.6 8.8 M2.2 4.9 H7.4 V8.8 M0.8 8.8 H9.2" fill="none" stroke="#202020" stroke-width="1.1"/></svg></div><div class="dh" style="left:633.6px">22 <svg width="7.80" height="7.80" viewBox="0 0 10 10" style="vertical-align:-1px;display:inline-block;margin-left:0.6px"><path d="M2 1 V6 Q2 8.6 0.6 9.6 M2 1 H8.6 V9.6 L7.4 9.2 M3.6 3 H7 M5.3 1.8 V5 M3.4 5 H7.2 M3.9 6.4 H6.7 V8.4 H3.9 Z" fill="none" stroke="#202020" stroke-width="1.1"/></svg><svg width="7.80" height="7.80" viewBox="0 0 10 10" style="vertical-align:-1px;display:inline-block;margin-left:0.6px"><path d="M4.6 0.4 L5.6 2.2 M0.8 3.2 H9.2 M3.8 5 L1.4 9.2 M6.2 5 L8.6 9.2" fill="none" stroke="#202020" stroke-width="1.1"/></svg></div><div class="dh" style="left:667.0px">23 <svg width="7.80" height="7.80" viewBox="0 0 10 10" style="vertical-align:-1px;display:inline-block;margin-left:0.6px"><path d="M2 1 V6 Q2 8.6 0.6 9.6 M2 1 H8.6 V9.6 L7.4 9.2 M3.6 3 H7 M5.3 1.8 V5 M3.4 5 H7.2 M3.9 6.4 H6.7 V8.4 H3.9 Z" fill="none" stroke="#202020" stroke-width="1.1"/></svg><svg width="7.80" height="7.80" viewBox="0 0 10 10" style="vertical-align:-1px;display:inline-block;margin-left:0.6px"><path d="M2 1 V9.4 M2 1 H8 V9.4 M2 5.1 H8 M2 8.9 H8" fill="none" stroke="#202020" stroke-width="1.1"/></svg></div><div class="dh" style="left:700.4px">24 <svg width="7.80" height="7.80" viewBox="0 0 10 10" style="vertical-align:-1px;display:inline-block;margin-left:0.6px"><path d="M2 1 V6 Q2 8.6 0.6 9.6 M2 1 H8.6 V9.6 L7.4 9.2 M3.6 3 H7 M5.3 1.8 V5 M3.4 5 H7.2 M3.9 6.4 H6.7 V8.4 H3.9 Z" fill="none" stroke="#202020" stroke-width="1.1"/></svg><svg width="7.80" height="7.80" viewBox="0 0 10 10" style="vertical-align:-1px;display:inline-block;margin-left:0.6px"><path d="M0.8 5.3 H9.2" fill="none" stroke="#202020" stroke-width="1.1"/></svg></div><div class="dh" style="left:733.7px">25 <svg width="7.80" height="7.80" viewBox="0 0 10 10" style="vertical-align:-1px;display:inline-block;margin-left:0.6px"><path d="M2 1 V6 Q2 8.6 0.6 9.6 M2 1 H8.6 V9.6 L7.4 9.2 M3.6 3 H7 M5.3 1.8 V5 M3.4 5 H7.2 M3.9 6.4 H6.7 V8.4 H3.9 Z" fill="none" stroke="#202020" stroke-width="1.1"/></svg><svg width="7.80" height="7.80" viewBox="0 0 10 10" style="vertical-align:-1px;display:inline-block;margin-left:0.6px"><path d="M1.8 2.3 H8.2 M0.8 8.3 H9.2" fill="none" stroke="#202020" stroke-width="1.1"/></svg></div><div class="dh" style="left:767.1px">26 <svg width="7.80" height="7.80" viewBox="0 0 10 10" style="vertical-align:-1px;display:inline-block;margin-left:0.6px"><path d="M2 1 V6 Q2 8.6 0.6 9.6 M2 1 H8.6 V9.6 L7.4 9.2 M3.6 3 H7 M5.3 1.8 V5 M3.4 5 H7.2 M3.9 6.4 H6.7 V8.4 H3.9 Z" fill="none" stroke="#202020" stroke-width="1.1"/></svg><svg width="7.80" height="7.80" viewBox="0 0 10 10" style="vertical-align:-1px;display:inline-block;margin-left:0.6px"><path d="M1.6 1.6 H8.4 M2.2 5.1 H7.8 M0.8 8.8 H9.2" fill="none" stroke="#202020" stroke-width="1.1"/></svg></div><div class="dh" style="left:800.4px">27 <svg width="7.80" height="7.80" viewBox="0 0 10 10" style="vertical-align:-1px;display:inline-block;margin-left:0.6px"><path d="M2 1 V6 Q2 8.6 0.6 9.6 M2 1 H8.6 V9.6 L7.4 9.2 M3.6 3 H7 M5.3 1.8 V5 M3.4 5 H7.2 M3.9 6.4 H6.7 V8.4 H3.9 Z" fill="none" stroke="#202020" stroke-width="1.1"/></svg><svg width="7.80" height="7.80" viewBox="0 0 10 10" style="vertical-align:-1px;display:inline-block;margin-left:0.6px"><path d="M1.2 1.6 V9.2 M1.2 1.6 H8.8 V9.2 M1.2 8.6 H8.8 M3.9 1.6 Q3.9 5.2 2.4 6.6 M6.1 1.6 V5.6 Q6.1 6.4 7.6 6.4" fill="none" stroke="#202020" stroke-width="1.1"/></svg></div><div class="dh" style="left:833.8px">28 <svg width="7.80" height="7.80" viewBox="0 0 10 10" style="vertical-align:-1px;display:inline-block;margin-left:0.6px"><path d="M2 1 V6 Q2 8.6 0.6 9.6 M2 1 H8.6 V9.6 L7.4 9.2 M3.6 3 H7 M5.3 1.8 V5 M3.4 5 H7.2 M3.9 6.4 H6.7 V8.4 H3.9 Z" fill="none" stroke="#202020" stroke-width="1.1"/></svg><svg width="7.80" height="7.80" viewBox="0 0 10 10" style="vertical-align:-1px;display:inline-block;margin-left:0.6px"><path d="M1.4 1.4 H8.6 M4.6 1.4 L3.6 8.8 M2.2 4.9 H7.4 V8.8 M0.8 8.8 H9.2" fill="none" stroke="#202020" stroke-width="1.1"/></svg></div><div class="dh" style="left:867.1px">29 <svg width="7.80" height="7.80" viewBox="0 0 10 10" style="vertical-align:-1px;display:inline-block;margin-left:0.6px"><path d="M2 1 V6 Q2 8.6 0.6 9.6 M2 1 H8.6 V9.6 L7.4 9.2 M3.6 3 H7 M5.3 1.8 V5 M3.4 5 H7.2 M3.9 6.4 H6.7 V8.4 H3.9 Z" fill="none" stroke="#202020" stroke-width="1.1"/></svg><svg width="7.80" height="7.80" viewBox="0 0 10 10" style="vertical-align:-1px;display:inline-block;margin-left:0.6px"><path d="M4.6 0.4 L5.6 2.2 M0.8 3.2 H9.2 M3.8 5 L1.4 9.2 M6.2 5 L8.6 9.2" fill="none" stroke="#202020" stroke-width="1.1"/></svg></div><div class="dh" style="left:900.5px">30 <svg width="7.80" height="7.80" viewBox="0 0 10 10" style="vertical-align:-1px;display:inline-block;margin-left:0.6px"><path d="M2 1 V6 Q2 8.6 0.6 9.6 M2 1 H8.6 V9.6 L7.4 9.2 M3.6 3 H7 M5.3 1.8 V5 M3.4 5 H7.2 M3.9 6.4 H6.7 V8.4 H3.9 Z" fill="none" stroke="#202020" stroke-width="1.1"/></svg><svg width="7.80" height="7.80" viewBox="0 0 10 10" style="vertical-align:-1px;display:inline-block;margin-left:0.6px"><path d="M2 1 V9.4 M2 1 H8 V9.4 M2 5.1 H8 M2 8.9 H8" fill="none" stroke="#202020" stroke-width="1.1"/></svg></div></div><div id="wrow"></div><div class="gl" style="left:33px"></div><div class="gl" style="left:67px"></div><div class="gl" style="left:100px"></div><div class="gl" style="left:133px"></div><div class="gl" style="left:167px"></div><div class="gl" style="left:200px"></div><div class="gl" style="left:233px"></div><div class="gl" style="left:267px"></div><div class="gl" style="left:300px"></div><div class="gl" style="left:333px"></div><div class="gl" style="left:367px"></div><div class="gl" style="left:400px"></div><div class="gl" style="left:434px"></div><div class="gl" style="left:467px"></div><div class="gl" style="left:500px"></div><div class="gl" style="left:534px"></div><div class="gl" style="left:567px"></div><div class="gl" style="left:600px"></div><div class="gl" style="left:634px"></div><div class="gl" style="left:667px"></div><div class="gl" style="left:700px"></div><div class="gl" style="left:734px"></div><div class="gl" style="left:767px"></div><div class="gl" style="left:800px"></div><div class="gl" style="left:834px"></div><div class="gl" style="left:867px"></div><div class="gl" style="left:900px"></div><div id="blue"></div><div id="now"></div><div class="abs" style="left:0;top:31px;width:33px;height:1px;background:rgba(200,200,200,.45)"></div></div><div class="abs" style="left:0;top:0;width:923px;height:534px;overflow:hidden"><div class="b w" style="left:55px;top:108px;width:436px;background:#80ecf2"><span class="lt">13:40</span><span class="rt">15:11</span><span class="m c"><b>SO21150162:052</b></span></div><div class="b h" style="left:517px;top:108px;width:16px;background:#a2dc64"><span class="m sd"><b>S.</b></span></div><div class="b w" style="left:55px;top:124px;width:338px;background:#a2cdc2"><span class="lt">13:40</span><span class="rt">16:52</span><span class="m c"><b>SO21110067:039</b></span></div><div class="b h" style="left:485px;top:124px;width:32px;background:#a2cdc2"><span class="m"><b>SO2...</b></span></div><div class="b h" style="left:521px;top:124px;width:32px;background:#d8d8d8"><span class="m"><b>SO2...</b></span></div><div class="b w" style="left:55px;top:140px;width:336px;background:#fa9a84"><span class="lt">13:40</span><span class="rt">16:04</span><span class="m c"><b>SO21150148:029</b></span></div><div class="b h" style="left:486px;top:140px;width:15px;background:#fce478"><span class="m sd"><b>S.</b></span></div><div class="b h" style="left:521px;top:140px;width:32px;background:#a2cdc2"><span class="m"><b>SO2...</b></span></div><div class="b w" style="left:55px;top:156px;width:226px;background:#a2cdc2"><span class="lt">13:40</span><span class="rt">8:41</span><span class="m c"><b>SO21150045:048</b></span></div><div class="b h" style="left:284px;top:156px;width:35px;background:#d6ce8a"><span class="m"><b>SO2...</b></span></div><div class="b w" style="left:326px;top:156px;width:63px;background:#fa9a84"><span class="m"><b>SO21150162...</b></span></div><div class="b h" style="left:390px;top:156px;width:98px;background:#a2dc64"><span class="m"><b>SO21140127:030;</b><i> Tas...</i></span></div><div class="b h" style="left:491px;top:156px;width:14px;background:#80ecf2"><span class="m sd"><b>S.</b></span></div><div class="b w" style="left:523px;top:156px;width:29px;background:#809ee8"><span class="m"><b>SO2...</b></span></div><div class="b w" style="left:55px;top:172px;width:203px;background:#a2dc64"><span class="lt">13:40</span><span class="rt">15:49</span><span class="m c"><b>SO21150079:092</b></span></div><div class="b h" style="left:261px;top:172px;width:31px;background:#a2dc64"><span class="m"><b>SO2...</b></span></div><div class="b w" style="left:294px;top:172px;width:31px;background:#d6ce8a"><span class="m"><b>SO2...</b></span></div><div class="b w" style="left:354px;top:172px;width:131px;background:#d6ce8a"><span class="lt">13:03</span><span class="rt">11:05</span><span class="m c"><b>SO21150162:051</b></span></div><div class="b h" style="left:487px;top:172px;width:14px;background:#80ecf2"><span class="m sd"><b>S.</b></span></div><div class="b h" style="left:523px;top:172px;width:29px;background:#809ee8"><span class="m"><b>SO2...</b></span></div><div class="b w" style="left:55px;top:188px;width:99px;background:#80ecf2"><span class="m"><b>SO21140030:065</b></span></div><div class="b w" style="left:156px;top:188px;width:125px;background:#fa9a84"><span class="lt">13:51</span><span class="rt">8:37</span><span class="m c"><b>SO21150155:039</b></span></div><div class="b w" style="left:290px;top:188px;width:32px;background:#d8d8d8"><span class="m"><b>SO2...</b></span></div><div class="b h" style="left:326px;top:188px;width:32px;background:#fa9a84"><span class="m"><b>SO2...</b></span></div><div class="b h" style="left:387px;top:188px;width:98px;background:#fce478"><span class="m"><b>SO21130045:030;</b><i> Tas...</i></span></div><div class="b w" style="left:488px;top:188px;width:32px;background:#d6ce8a"><span class="m"><b>SO2...</b></span></div><div class="b h" style="left:523px;top:188px;width:26px;background:#a2dc64"><span class="m"><b>SO...</b></span></div><div class="b w" style="left:55px;top:204px;width:72px;background:#d6ce8a"><span class="m"><b>SO21140136:0...</b></span></div><div class="b h" style="left:148px;top:204px;width:101px;background:#d8d8d8"><span class="m"><b>SO21150180:001;</b><i> Task...</i></span></div><div class="b h" style="left:251px;top:204px;width:15px;background:#a2dc64"><span class="m sd"><b>S.</b></span></div><div class="b w" style="left:281px;top:204px;width:15px;background:#e6e6dc"><span class="m sd"><b>S.</b></span></div><div class="b h" style="left:321px;top:204px;width:15px;background:#a2cdc2"><span class="m sd"><b>S.</b></span></div><div class="b h" style="left:386px;top:204px;width:99px;background:#d6ce8a"><span class="m"><b>SO21150162:051;</b><i> Tas...</i></span></div><div class="b h" style="left:488px;top:204px;width:32px;background:#d6ce8a"><span class="m"><b>SO2...</b></span></div><div class="b w" style="left:55px;top:220px;width:71px;background:#fa9a84"><span class="m"><b>SO21160070:0...</b></span></div><div class="b h" style="left:150px;top:220px;width:99px;background:#a2dc64"><span class="m"><b>SO21150079:092;</b><i> Tas...</i></span></div><div class="b h" style="left:250px;top:220px;width:15px;background:#80ecf2"><span class="m sd"><b>S.</b></span></div><div class="b h" style="left:281px;top:220px;width:15px;background:#e6e6dc"><span class="m sd"><b>S.</b></span></div><div class="b w" style="left:322px;top:220px;width:32px;background:#809ee8"><span class="m"><b>SO2...</b></span></div><div class="b h" style="left:359px;top:220px;width:30px;background:#fa9a84"><span class="m"><b>SO2...</b></span></div><div class="b h" style="left:391px;top:220px;width:95px;background:#a2dc64"><span class="m"><b>SO21160043:084;</b><i> Ta...</i></span></div><div class="b h" style="left:488px;top:220px;width:15px;background:#80ecf2"><span class="m sd"><b>S.</b></span></div><div class="b w" style="left:55px;top:236px;width:34px;background:#a2cdc2"><span class="m"><b>SO2...</b></span></div><div class="b w" style="left:91px;top:236px;width:198px;background:#c8a6f0"><span class="lt">15:43</span><span class="rt">14:49</span><span class="m c"><b>SO21150099:027</b></span></div><div class="b h" style="left:294px;top:236px;width:31px;background:#d6ce8a"><span class="m"><b>SO2...</b></span></div><div class="b h" style="left:327px;top:236px;width:32px;background:#809ee8"><span class="m"><b>SO2...</b></span></div><div class="b h" style="left:392px;top:236px;width:99px;background:#80ecf2"><span class="m"><b>SO21150162:052;</b><i> Tas...</i></span></div><div class="b w" style="left:57px;top:252px;width:103px;background:#809ee8"><span class="m"><b>SO21130051:039</b></span></div><div class="b w" style="left:247px;top:252px;width:239px;background:#a2dc64"><span class="lt">8:17</span><span class="rt">11:48</span><span class="m c"><b>SO21160043:084</b></span></div><div class="b h" style="left:489px;top:252px;width:32px;background:#fab478"><span class="m"><b>SO2...</b></span></div><div class="b w" style="left:59px;top:268px;width:224px;background:#809ee8"><span class="lt">15:53</span><span class="rt">10:42</span><span class="m c"><b>SO21130045:029</b></span></div><div class="b h" style="left:290px;top:268px;width:32px;background:#d8d8d8"><span class="m"><b>SO2...</b></span></div><div class="b h" style="left:354px;top:268px;width:31px;background:#d6ce8a"><span class="m"><b>SO2...</b></span></div><div class="b h" style="left:387px;top:268px;width:15px;background:#809ee8"><span class="m sd"><b>S.</b></span></div><div class="b h" style="left:489px;top:268px;width:28px;background:#a2dc64"><span class="m"><b>SO...</b></span></div><div class="b w" style="left:59px;top:284px;width:98px;background:#a2cdc2"><span class="m"><b>SO21150088:006</b></span></div><div class="b w" style="left:159px;top:284px;width:98px;background:#a2cdc2"><span class="m"><b>SO21120060:050</b></span></div><div class="b h" style="left:259px;top:284px;width:22px;background:#a2cdc2"><span class="m sd"><b>S...</b></span></div><div class="b w" style="left:290px;top:284px;width:31px;background:#d8d8d8"><span class="m"><b>SO2...</b></span></div><div class="b h" style="left:322px;top:284px;width:32px;background:#809ee8"><span class="m"><b>SO2...</b></span></div><div class="b h" style="left:359px;top:284px;width:30px;background:#a2dc64"><span class="m"><b>SO2...</b></span></div><div class="b h" style="left:391px;top:284px;width:15px;background:#a2cdc2"><span class="m sd"><b>S.</b></span></div><div class="b h" style="left:491px;top:284px;width:32px;background:#a2dc64"><span class="m"><b>SO2...</b></span></div><div class="b w" style="left:59px;top:300px;width:458px;background:#a2cdc2"><span class="lt">16:29</span><span class="rt">10:04</span><span class="m c"><b>SO21150075:088</b></span></div><div class="b w" style="left:59px;top:316px;width:430px;background:#fce478"><span class="lt">16:33</span><span class="rt">13:57</span><span class="m c"><b>SO21130045:030</b></span></div><div class="b w" style="left:59px;top:332px;width:260px;background:#d6ce8a"><span class="lt">16:33</span><span class="rt">11:54</span><span class="m c"><b>SO21150059:068</b></span></div><div class="b h" style="left:359px;top:332px;width:32px;background:#fa9a84"><span class="m"><b>SO2...</b></span></div><div class="b w" style="left:59px;top:348px;width:56px;background:#fab478"><span class="m"><b>SO211501...</b></span></div><div class="b w" style="left:119px;top:348px;width:402px;background:#a2dc64"><span class="lt">12:10</span><span class="rt">13:07</span><span class="m c"><b>SO21140127:030</b></span></div><div class="b h" style="left:59px;top:364px;width:35px;background:#d6ce8a"><span class="m"><b>SO2...</b></span></div><div class="b w" style="left:114px;top:364px;width:439px;background:#a2cdc2"><span class="lt">8:06</span><span class="rt">12:08</span><span class="m c"><b>SO21130045:032</b></span></div><div class="b w" style="left:60px;top:380px;width:493px;background:#d8d8d8"><span class="lt">17:13</span><span class="rt">11:52</span><span class="m c"><b>SO21150148:028</b></span></div><div class="b w" style="left:55px;top:396px;width:26px;background:#809ee8"><span class="m"><b>SO...</b></span></div><div class="b w" style="left:82px;top:396px;width:439px;background:#fab478"><span class="lt">8:27</span><span class="rt">12:49</span><span class="m c"><b>SO21150162:053</b></span></div><div class="b w" style="left:55px;top:412px;width:26px;background:#fab478"><span class="m"><b>SO...</b></span></div><div class="b w" style="left:84px;top:412px;width:409px;background:#80ecf2"><span class="lt">10:45</span><span class="rt">17:03</span><span class="m c"><b>SO21110084:063</b></span></div><div class="b w" style="left:55px;top:428px;width:32px;background:#fab478"><span class="m"><b>SO2...</b></span></div><div class="b w" style="left:88px;top:428px;width:461px;background:#a2dc64"><span class="lt">13:21</span><span class="rt">9:07</span><span class="m c"><b>SO21150099:028</b></span></div><div class="b h" style="left:55px;top:444px;width:32px;background:#fab478"><span class="m"><b>SO2...</b></span></div><div class="b w" style="left:92px;top:444px;width:164px;background:#d6ce8a"><span class="lt">16:23</span><span class="rt">14:47</span><span class="m c"><b>SO21140103:094</b></span></div><div class="b h" style="left:258px;top:444px;width:31px;background:#c8a6f0"><span class="m"><b>SO2...</b></span></div><div class="b h" style="left:359px;top:444px;width:28px;background:#809ee8"><span class="m"><b>SO...</b></span></div><div class="b w" style="left:55px;top:460px;width:30px;background:#fa9a84"><span class="m"><b>SO2...</b></span></div><div class="b w" style="left:94px;top:460px;width:155px;background:#d8d8d8"><span class="lt">17:33</span><span class="rt">9:45</span><span class="m c"><b>SO21150180:001</b></span></div><div class="b h" style="left:254px;top:460px;width:15px;background:#d6ce8a"><span class="m sd"><b>S.</b></span></div><div class="b h" style="left:281px;top:460px;width:15px;background:#809ee8"><span class="m sd"><b>S.</b></span></div><div class="b h" style="left:55px;top:476px;width:30px;background:#fa9a84"><span class="m"><b>SO2...</b></span></div><div class="b h" style="left:94px;top:476px;width:54px;background:#d8d8d8"><span class="m"><b>SO21150...</b></span></div><div class="b w" style="left:152px;top:476px;width:96px;background:#809ee8"><span class="m"><b>SO21120046:029</b></span></div><div class="b h" style="left:249px;top:476px;width:32px;background:#809ee8"><span class="m"><b>SO2...</b></span></div><div class="b h" style="left:290px;top:476px;width:31px;background:#d8d8d8"><span class="m"><b>SO2...</b></span></div><div class="b h" style="left:55px;top:492px;width:26px;background:#fab478"><span class="m"><b>SO...</b></span></div><div class="b w" style="left:83px;top:492px;width:15px;background:#80ecf2"><span class="m sd"><b>S.</b></span></div><div class="b w" style="left:116px;top:492px;width:275px;background:#809ee8"><span class="lt">9:15</span><span class="rt">15:29</span><span class="m c"><b>SO21140154:068</b></span></div><div class="b h" style="left:55px;top:508px;width:26px;background:#809ee8"><span class="m"><b>SO...</b></span></div><div class="b h" style="left:82px;top:508px;width:32px;background:#fab478"><span class="m"><b>SO2...</b></span></div><div class="b h" style="left:115px;top:508px;width:15px;background:#d6ce8a"><span class="m sd"><b>S.</b></span></div><div class="b h" style="left:152px;top:508px;width:96px;background:#809ee8"><span class="m"><b>SO21120046:029;</b><i> Ta...</i></span></div><div class="b h" style="left:249px;top:508px;width:15px;background:#a2dc64"><span class="m sd"><b>S.</b></span></div><div class="b h" style="left:55px;top:524px;width:15px;background:#a2cdc2"><span class="m sd"><b>S.</b></span></div><div class="b w" style="left:81px;top:524px;width:15px;background:#80ecf2"><span class="m sd"><b>S.</b></span></div><div class="b h" style="left:114px;top:524px;width:15px;background:#a2cdc2"><span class="m sd"><b>S.</b></span></div><div class="b h" style="left:155px;top:524px;width:92px;background:#fa9a84"><span class="m"><b>SO21150155:039;</b><i> T...</i></span></div><div class="b w" style="left:248px;top:524px;width:15px;background:#fab478"><span class="m sd"><b>S.</b></span></div></div><div class="abs" style="left:0;top:534px;width:924px;height:2px;background:#e4e4e4"></div><div class="abs" style="left:0;top:536px;width:1024px;height:1px;background:#a8a8a8"></div><div class="abs" style="left:2px;top:74px;width:1px;height:461px;background:#b8b8b8"></div><div class="abs" style="left:2px;top:74px;width:1020px;height:1px;background:#a0a0a0"></div><div class="abs" style="left:922px;top:74px;width:1px;height:462px;background:#a0a0a0"></div><div id="cal"><div class="mh" style="top:1px">2023<svg width="7.60" height="7.60" viewBox="0 0 10 10" style="vertical-align:-1px;display:inline-block;margin-left:0px"><path d="M3.2 0.4 L1.6 3 M2.6 2 H8.6 M2.2 4.6 H8 M3.2 4.6 V6.9 M0.8 6.9 H9.2 M5.6 2 V9.8" fill="none" stroke="#202020" stroke-width="1.05"/></svg>6<svg width="7.60" height="7.60" viewBox="0 0 10 10" style="vertical-align:-1px;display:inline-block;margin-left:0px"><path d="M2.6 1 V6 Q2.6 8.6 1 9.6 M2.6 1 H8 V9.6 L6.9 9.2 M2.6 3.8 H8 M2.6 6.4 H8" fill="none" stroke="#202020" stroke-width="1.05"/></svg></div><div class="abs" style="left:4px;top:3px;width:0;height:0;border-top:3.5px solid transparent;border-bottom:3.5px solid transparent;border-right:4px solid #404040"></div><div class="abs" style="left:87px;top:3px;width:0;height:0;border-top:3.5px solid transparent;border-bottom:3.5px solid transparent;border-left:4px solid #404040"></div><div class="wd" style="left:5.7px;top:12px"><svg width="8.60" height="8.60" viewBox="0 0 10 10" style="vertical-align:-1px;display:inline-block;margin-left:0px"><path d="M0.8 5.3 H9.2" fill="none" stroke="#202020" stroke-width="1.05"/></svg></div><div class="wd" style="left:17.4px;top:12px"><svg width="8.60" height="8.60" viewBox="0 0 10 10" style="vertical-align:-1px;display:inline-block;margin-left:0px"><path d="M1.8 2.3 H8.2 M0.8 8.3 H9.2" fill="none" stroke="#202020" stroke-width="1.05"/></svg></div><div class="wd" style="left:29.0px;top:12px"><svg width="8.60" height="8.60" viewBox="0 0 10 10" style="vertical-align:-1px;display:inline-block;margin-left:0px"><path d="M1.6 1.6 H8.4 M2.2 5.1 H7.8 M0.8 8.8 H9.2" fill="none" stroke="#202020" stroke-width="1.05"/></svg></div><div class="wd" style="left:40.7px;top:12px"><svg width="8.60" height="8.60" viewBox="0 0 10 10" style="vertical-align:-1px;display:inline-block;margin-left:0px"><path d="M1.2 1.6 V9.2 M1.2 1.6 H8.8 V9.2 M1.2 8.6 H8.8 M3.9 1.6 Q3.9 5.2 2.4 6.6 M6.1 1.6 V5.6 Q6.1 6.4 7.6 6.4" fill="none" stroke="#202020" stroke-width="1.05"/></svg></div><div class="wd" style="left:52.4px;top:12px"><svg width="8.60" height="8.60" viewBox="0 0 10 10" style="vertical-align:-1px;display:inline-block;margin-left:0px"><path d="M1.4 1.4 H8.6 M4.6 1.4 L3.6 8.8 M2.2 4.9 H7.4 V8.8 M0.8 8.8 H9.2" fill="none" stroke="#202020" stroke-width="1.05"/></svg></div><div class="wd" style="left:64.0px;top:12px"><svg width="8.60" height="8.60" viewBox="0 0 10 10" style="vertical-align:-1px;display:inline-block;margin-left:0px"><path d="M4.6 0.4 L5.6 2.2 M0.8 3.2 H9.2 M3.8 5 L1.4 9.2 M6.2 5 L8.6 9.2" fill="none" stroke="#202020" stroke-width="1.05"/></svg></div><div class="wd" style="left:75.7px;top:12px"><svg width="8.60" height="8.60" viewBox="0 0 10 10" style="vertical-align:-1px;display:inline-block;margin-left:0px"><path d="M2 1 V9.4 M2 1 H8 V9.4 M2 5.1 H8 M2 8.9 H8" fill="none" stroke="#202020" stroke-width="1.05"/></svg></div><div class="wl" style="top:24px;height:50px"></div><div class="wk" style="top:24px">23</div><div class="dn g" style="left:7.0px;top:24px">29</div><div class="dn g" style="left:18.2px;top:24px">30</div><div class="dn g" style="left:29.4px;top:24px">31</div><div class="dn " style="left:40.6px;top:24px">1</div><div class="dn " style="left:51.8px;top:24px">2</div><div class="dn " style="left:63.0px;top:24px">3</div><div class="dn " style="left:74.2px;top:24px">4</div><div class="wk" style="top:34px">24</div><div class="dn " style="left:7.0px;top:34px">5</div><div class="dn " style="left:18.2px;top:34px">6</div><div class="dn " style="left:29.4px;top:34px">7</div><div class="dn " style="left:40.6px;top:34px">8</div><div class="dn " style="left:51.8px;top:34px">9</div><div class="dn " style="left:63.0px;top:34px">10</div><div class="dn " style="left:74.2px;top:34px">11</div><div class="wk" style="top:44px">25</div><div class="dn " style="left:7.0px;top:44px">12</div><div class="dn " style="left:18.2px;top:44px">13</div><div class="dn " style="left:29.4px;top:44px">14</div><div class="dn " style="left:40.6px;top:44px">15</div><div class="dn " style="left:51.8px;top:44px">16</div><div class="dn " style="left:63.0px;top:44px">17</div><div class="dn " style="left:74.2px;top:44px">18</div><div class="wk" style="top:54px">26</div><div class="dn " style="left:7.0px;top:54px">19</div><div class="dn " style="left:18.2px;top:54px">20</div><div class="dn " style="left:29.4px;top:54px">21</div><div class="dn " style="left:40.6px;top:54px">22</div><div class="dn " style="left:51.8px;top:54px">23</div><div class="dn " style="left:63.0px;top:54px">24</div><div class="dn " style="left:74.2px;top:54px">25</div><div class="wk" style="top:64px">27</div><div class="dn " style="left:7.0px;top:64px">26</div><div class="dn " style="left:18.2px;top:64px">27</div><div class="dn " style="left:29.4px;top:64px">28</div><div class="dn " style="left:40.6px;top:64px">29</div><div class="dn " style="left:51.8px;top:64px">30</div><div class="abs" style="left:9px;top:116px;width:11.5px;height:10px;background:#0078d7"></div><div class="abs" style="left:20.5px;top:116px;width:11.5px;height:10px;border:1px solid #c04848"></div><div class="mh" style="top:84px">2023<svg width="7.60" height="7.60" viewBox="0 0 10 10" style="vertical-align:-1px;display:inline-block;margin-left:0px"><path d="M3.2 0.4 L1.6 3 M2.6 2 H8.6 M2.2 4.6 H8 M3.2 4.6 V6.9 M0.8 6.9 H9.2 M5.6 2 V9.8" fill="none" stroke="#202020" stroke-width="1.05"/></svg>7<svg width="7.60" height="7.60" viewBox="0 0 10 10" style="vertical-align:-1px;display:inline-block;margin-left:0px"><path d="M2.6 1 V6 Q2.6 8.6 1 9.6 M2.6 1 H8 V9.6 L6.9 9.2 M2.6 3.8 H8 M2.6 6.4 H8" fill="none" stroke="#202020" stroke-width="1.05"/></svg></div><div class="wd" style="left:5.7px;top:95px"><svg width="8.60" height="8.60" viewBox="0 0 10 10" style="vertical-align:-1px;display:inline-block;margin-left:0px"><path d="M0.8 5.3 H9.2" fill="none" stroke="#202020" stroke-width="1.05"/></svg></div><div class="wd" style="left:17.4px;top:95px"><svg width="8.60" height="8.60" viewBox="0 0 10 10" style="vertical-align:-1px;display:inline-block;margin-left:0px"><path d="M1.8 2.3 H8.2 M0.8 8.3 H9.2" fill="none" stroke="#202020" stroke-width="1.05"/></svg></div><div class="wd" style="left:29.0px;top:95px"><svg width="8.60" height="8.60" viewBox="0 0 10 10" style="vertical-align:-1px;display:inline-block;margin-left:0px"><path d="M1.6 1.6 H8.4 M2.2 5.1 H7.8 M0.8 8.8 H9.2" fill="none" stroke="#202020" stroke-width="1.05"/></svg></div><div class="wd" style="left:40.7px;top:95px"><svg width="8.60" height="8.60" viewBox="0 0 10 10" style="vertical-align:-1px;display:inline-block;margin-left:0px"><path d="M1.2 1.6 V9.2 M1.2 1.6 H8.8 V9.2 M1.2 8.6 H8.8 M3.9 1.6 Q3.9 5.2 2.4 6.6 M6.1 1.6 V5.6 Q6.1 6.4 7.6 6.4" fill="none" stroke="#202020" stroke-width="1.05"/></svg></div><div class="wd" style="left:52.4px;top:95px"><svg width="8.60" height="8.60" viewBox="0 0 10 10" style="vertical-align:-1px;display:inline-block;margin-left:0px"><path d="M1.4 1.4 H8.6 M4.6 1.4 L3.6 8.8 M2.2 4.9 H7.4 V8.8 M0.8 8.8 H9.2" fill="none" stroke="#202020" stroke-width="1.05"/></svg></div><div class="wd" style="left:64.0px;top:95px"><svg width="8.60" height="8.60" viewBox="0 0 10 10" style="vertical-align:-1px;display:inline-block;margin-left:0px"><path d="M4.6 0.4 L5.6 2.2 M0.8 3.2 H9.2 M3.8 5 L1.4 9.2 M6.2 5 L8.6 9.2" fill="none" stroke="#202020" stroke-width="1.05"/></svg></div><div class="wd" style="left:75.7px;top:95px"><svg width="8.60" height="8.60" viewBox="0 0 10 10" style="vertical-align:-1px;display:inline-block;margin-left:0px"><path d="M2 1 V9.4 M2 1 H8 V9.4 M2 5.1 H8 M2 8.9 H8" fill="none" stroke="#202020" stroke-width="1.05"/></svg></div><div class="wl" style="top:107px;height:60px"></div><div class="wk" style="top:107px">27</div><div class="dn " style="left:63.0px;top:107px">1</div><div class="dn " style="left:74.2px;top:107px">2</div><div class="wk" style="top:117px">28</div><div class="dn sel" style="left:7.0px;top:117px">3</div><div class="dn tod" style="left:18.2px;top:117px">4</div><div class="dn bd" style="left:29.4px;top:117px">5</div><div class="dn bd" style="left:40.6px;top:117px">6</div><div class="dn bd" style="left:51.8px;top:117px">7</div><div class="dn bd" style="left:63.0px;top:117px">8</div><div class="dn bd" style="left:74.2px;top:117px">9</div><div class="wk" style="top:127px">29</div><div class="dn bd" style="left:7.0px;top:127px">10</div><div class="dn bd" style="left:18.2px;top:127px">11</div><div class="dn bd" style="left:29.4px;top:127px">12</div><div class="dn bd" style="left:40.6px;top:127px">13</div><div class="dn bd" style="left:51.8px;top:127px">14</div><div class="dn bd" style="left:63.0px;top:127px">15</div><div class="dn bd" style="left:74.2px;top:127px">16</div><div class="wk" style="top:137px">30</div><div class="dn bd" style="left:7.0px;top:137px">17</div><div class="dn bd" style="left:18.2px;top:137px">18</div><div class="dn bd" style="left:29.4px;top:137px">19</div><div class="dn " style="left:40.6px;top:137px">20</div><div class="dn " style="left:51.8px;top:137px">21</div><div class="dn " style="left:63.0px;top:137px">22</div><div class="dn " style="left:74.2px;top:137px">23</div><div class="wk" style="top:147px">31</div><div class="dn " style="left:7.0px;top:147px">24</div><div class="dn " style="left:18.2px;top:147px">25</div><div class="dn " style="left:29.4px;top:147px">26</div><div class="dn " style="left:40.6px;top:147px">27</div><div class="dn " style="left:51.8px;top:147px">28</div><div class="dn " style="left:63.0px;top:147px">29</div><div class="dn " style="left:74.2px;top:147px">30</div><div class="wk" style="top:157px">32</div><div class="dn " style="left:7.0px;top:157px">31</div><div class="mh" style="top:167px">2023<svg width="7.60" height="7.60" viewBox="0 0 10 10" style="vertical-align:-1px;display:inline-block;margin-left:0px"><path d="M3.2 0.4 L1.6 3 M2.6 2 H8.6 M2.2 4.6 H8 M3.2 4.6 V6.9 M0.8 6.9 H9.2 M5.6 2 V9.8" fill="none" stroke="#202020" stroke-width="1.05"/></svg>8<svg width="7.60" height="7.60" viewBox="0 0 10 10" style="vertical-align:-1px;display:inline-block;margin-left:0px"><path d="M2.6 1 V6 Q2.6 8.6 1 9.6 M2.6 1 H8 V9.6 L6.9 9.2 M2.6 3.8 H8 M2.6 6.4 H8" fill="none" stroke="#202020" stroke-width="1.05"/></svg></div><div class="wd" style="left:5.7px;top:178px"><svg width="8.60" height="8.60" viewBox="0 0 10 10" style="vertical-align:-1px;display:inline-block;margin-left:0px"><path d="M0.8 5.3 H9.2" fill="none" stroke="#202020" stroke-width="1.05"/></svg></div><div class="wd" style="left:17.4px;top:178px"><svg width="8.60" height="8.60" viewBox="0 0 10 10" style="vertical-align:-1px;display:inline-block;margin-left:0px"><path d="M1.8 2.3 H8.2 M0.8 8.3 H9.2" fill="none" stroke="#202020" stroke-width="1.05"/></svg></div><div class="wd" style="left:29.0px;top:178px"><svg width="8.60" height="8.60" viewBox="0 0 10 10" style="vertical-align:-1px;display:inline-block;margin-left:0px"><path d="M1.6 1.6 H8.4 M2.2 5.1 H7.8 M0.8 8.8 H9.2" fill="none" stroke="#202020" stroke-width="1.05"/></svg></div><div class="wd" style="left:40.7px;top:178px"><svg width="8.60" height="8.60" viewBox="0 0 10 10" style="vertical-align:-1px;display:inline-block;margin-left:0px"><path d="M1.2 1.6 V9.2 M1.2 1.6 H8.8 V9.2 M1.2 8.6 H8.8 M3.9 1.6 Q3.9 5.2 2.4 6.6 M6.1 1.6 V5.6 Q6.1 6.4 7.6 6.4" fill="none" stroke="#202020" stroke-width="1.05"/></svg></div><div class="wd" style="left:52.4px;top:178px"><svg width="8.60" height="8.60" viewBox="0 0 10 10" style="vertical-align:-1px;display:inline-block;margin-left:0px"><path d="M1.4 1.4 H8.6 M4.6 1.4 L3.6 8.8 M2.2 4.9 H7.4 V8.8 M0.8 8.8 H9.2" fill="none" stroke="#202020" stroke-width="1.05"/></svg></div><div class="wd" style="left:64.0px;top:178px"><svg width="8.60" height="8.60" viewBox="0 0 10 10" style="vertical-align:-1px;display:inline-block;margin-left:0px"><path d="M4.6 0.4 L5.6 2.2 M0.8 3.2 H9.2 M3.8 5 L1.4 9.2 M6.2 5 L8.6 9.2" fill="none" stroke="#202020" stroke-width="1.05"/></svg></div><div class="wd" style="left:75.7px;top:178px"><svg width="8.60" height="8.60" viewBox="0 0 10 10" style="vertical-align:-1px;display:inline-block;margin-left:0px"><path d="M2 1 V9.4 M2 1 H8 V9.4 M2 5.1 H8 M2 8.9 H8" fill="none" stroke="#202020" stroke-width="1.05"/></svg></div><div class="wl" style="top:190px;height:60px"></div><div class="wk" style="top:190px">32</div><div class="dn " style="left:18.2px;top:190px">1</div><div class="dn " style="left:29.4px;top:190px">2</div><div class="dn " style="left:40.6px;top:190px">3</div><div class="dn " style="left:51.8px;top:190px">4</div><div class="dn " style="left:63.0px;top:190px">5</div><div class="dn " style="left:74.2px;top:190px">6</div><div class="wk" style="top:200px">33</div><div class="dn " style="left:7.0px;top:200px">7</div><div class="dn " style="left:18.2px;top:200px">8</div><div class="dn " style="left:29.4px;top:200px">9</div><div class="dn " style="left:40.6px;top:200px">10</div><div class="dn " style="left:51.8px;top:200px">11</div><div class="dn " style="left:63.0px;top:200px">12</div><div class="dn " style="left:74.2px;top:200px">13</div><div class="wk" style="top:210px">34</div><div class="dn " style="left:7.0px;top:210px">14</div><div class="dn " style="left:18.2px;top:210px">15</div><div class="dn " style="left:29.4px;top:210px">16</div><div class="dn " style="left:40.6px;top:210px">17</div><div class="dn " style="left:51.8px;top:210px">18</div><div class="dn " style="left:63.0px;top:210px">19</div><div class="dn " style="left:74.2px;top:210px">20</div><div class="wk" style="top:220px">35</div><div class="dn " style="left:7.0px;top:220px">21</div><div class="dn " style="left:18.2px;top:220px">22</div><div class="dn " style="left:29.4px;top:220px">23</div><div class="dn " style="left:40.6px;top:220px">24</div><div class="dn " style="left:51.8px;top:220px">25</div><div class="dn " style="left:63.0px;top:220px">26</div><div class="dn " style="left:74.2px;top:220px">27</div><div class="wk" style="top:230px">36</div><div class="dn " style="left:7.0px;top:230px">28</div><div class="dn " style="left:18.2px;top:230px">29</div><div class="dn " style="left:29.4px;top:230px">30</div><div class="dn " style="left:40.6px;top:230px">31</div><div class="dn g" style="left:51.8px;top:230px">1</div><div class="dn g" style="left:63.0px;top:230px">2</div><div class="dn g" style="left:74.2px;top:230px">3</div><div class="wk" style="top:240px">37</div><div class="dn g" style="left:7.0px;top:240px">4</div><div class="dn g" style="left:18.2px;top:240px">5</div><div class="dn g" style="left:29.4px;top:240px">6</div><div class="dn g" style="left:40.6px;top:240px">7</div><div class="dn g" style="left:51.8px;top:240px">8</div><div class="dn g" style="left:63.0px;top:240px">9</div><div class="dn g" style="left:74.2px;top:240px">10</div></div><div id="cal2"></div><div class="abs" style="left:1022px;top:74px;width:2px;height:463px;background:#b4b4b4"></div><div id="status"><span style="left:2px;font-size:8.6px;letter-spacing:-0.3px;top:1px">IP:127.0.0.1</span><span style="left:82px;font-size:8.7px;top:1px">Admin</span><span style="left:162px;font-size:8.6px;top:1px">Qianru electronic systems</span><span style="left:362px;font-size:8.8px;top:1px">The System Optimization operation ran for(second)37</span></div><div class="ssep" style="left:80px"></div><div class="ssep" style="left:160px"></div><div class="ssep" style="left:360px"></div><div class="ssep" style="left:615px"></div><div id="task"></div><div class="abs" style="left:32px;top:550px;width:192px;height:5px;background:#eeeeee"></div><div class="abs" style="left:390px;top:550px;width:33px;height:5px;background:#4a5a62"></div></body></html>
